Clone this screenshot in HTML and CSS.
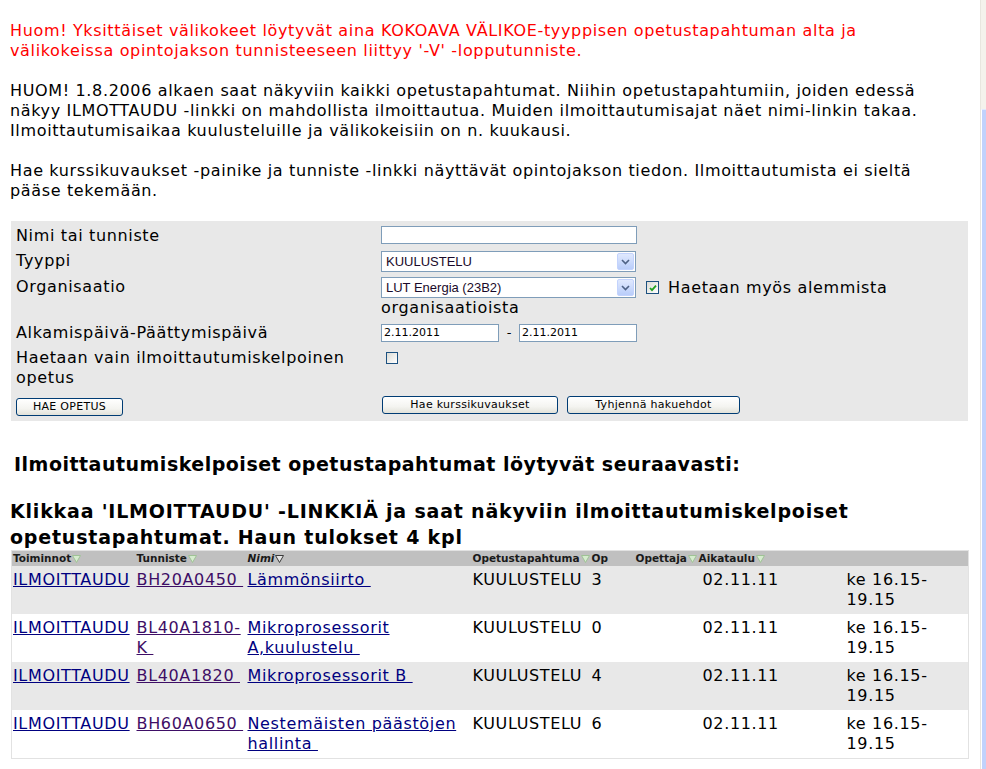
FILE: index.html
```html
<!DOCTYPE html>
<html lang="fi">
<head>
<meta charset="utf-8">
<title>Opetustapahtumat</title>
<link rel="stylesheet" href="styles.css">
</head>
<body>
<div class="page">
  <main class="content">
    <p class="notice">Huom! Yksittäiset välikokeet löytyvät aina KOKOAVA VÄLIKOE-tyyppisen opetustapahtuman alta ja<br>välikokeissa opintojakson tunnisteeseen liittyy '-V' -lopputunniste.</p>
    <p class="info">HUOM! 1.8.2006 alkaen saat näkyviin kaikki opetustapahtumat. Niihin opetustapahtumiin, joiden edessä<br>näkyy ILMOTTAUDU -linkki on mahdollista ilmoittautua. Muiden ilmoittautumisajat näet nimi-linkin takaa.<br>Ilmoittautumisaikaa kuulusteluille ja välikokeisiin on n. kuukausi.</p>
    <p class="info">Hae kurssikuvaukset -painike ja tunniste -linkki näyttävät opintojakson tiedon. Ilmoittautumista ei sieltä<br>pääse tekemään.</p>

    <form class="search">
      <div class="label">Nimi tai tunniste</div>
      <div class="field"><span class="textbox wide"></span></div>

      <div class="label">Tyyppi</div>
      <div class="field"><span class="select"><span class="select-text">KUULUSTELU</span><span class="select-arrow"><svg width="9" height="6" viewBox="0 0 9 6"><path d="M1 1 L4.5 4.5 L8 1" fill="none" stroke="#4d6185" stroke-width="1.6"/></svg></span></span></div>

      <div class="label">Organisaatio</div>
      <div class="field">
        <div class="field-line">
          <span class="select"><span class="select-text">LUT Energia (23B2)</span><span class="select-arrow"><svg width="9" height="6" viewBox="0 0 9 6"><path d="M1 1 L4.5 4.5 L8 1" fill="none" stroke="#4d6185" stroke-width="1.6"/></svg></span></span>
          <span class="check checked"><svg width="10" height="10" viewBox="0 0 10 10"><path d="M2 5 L4 7.2 L8 2.6" fill="none" stroke="#21a121" stroke-width="1.8"/></svg></span>
          <span class="check-label">Haetaan myös alemmista</span>
        </div>
        <div class="field-wrap">organisaatioista</div>
      </div>

      <div class="label">Alkamispäivä-Päättymispäivä</div>
      <div class="field date-line"><span class="textbox date">2.11.2011</span><span class="dash">-</span><span class="textbox date">2.11.2011</span></div>

      <div class="label">Haetaan vain ilmoittautumiskelpoinen<br>opetus</div>
      <div class="field top"><span class="check single"></span></div>

      <div class="label buttons-left"><button type="button" class="btn btn-hae">HAE OPETUS</button></div>
      <div class="field buttons"><button type="button" class="btn btn-kurssi">Hae kurssikuvaukset</button><button type="button" class="btn btn-tyhj">Tyhjennä hakuehdot</button></div>
    </form>

    <h2 class="found">Ilmoittautumiskelpoiset opetustapahtumat löytyvät seuraavasti:</h2>
    <h2 class="click">Klikkaa 'ILMOITTAUDU' -LINKKIÄ ja saat näkyviin ilmoittautumiskelpoiset<br>opetustapahtumat. Haun tulokset 4 kpl</h2>

    <table class="results">
      <colgroup>
        <col class="c1"><col class="c2"><col class="c3"><col class="c4"><col class="c5"><col class="c6"><col class="c7"><col class="c8">
      </colgroup>
      <thead>
        <tr>
          <th>Toiminnot<svg class="tri" width="9" height="8" viewBox="0 0 9 8"><path d="M0.5 0.5 H8.5 L4.5 7.5 Z" fill="#d6ecce" stroke="#9fc296"/></svg></th>
          <th>Tunniste<svg class="tri" width="9" height="8" viewBox="0 0 9 8"><path d="M0.5 0.5 H8.5 L4.5 7.5 Z" fill="#d6ecce" stroke="#9fc296"/></svg></th>
          <th><em>Nimi</em><svg class="tri" width="9" height="8" viewBox="0 0 9 8"><path d="M0.5 0.5 H8.5 L4.5 7.5 Z" fill="#e6e6e6" stroke="#3a3a3a"/></svg></th>
          <th>Opetustapahtuma<svg class="tri" width="9" height="8" viewBox="0 0 9 8"><path d="M0.5 0.5 H8.5 L4.5 7.5 Z" fill="#d6ecce" stroke="#9fc296"/></svg></th>
          <th>Op</th>
          <th>Opettaja<svg class="tri" width="9" height="8" viewBox="0 0 9 8"><path d="M0.5 0.5 H8.5 L4.5 7.5 Z" fill="#d6ecce" stroke="#9fc296"/></svg></th>
          <th>Aikataulu<svg class="tri" width="9" height="8" viewBox="0 0 9 8"><path d="M0.5 0.5 H8.5 L4.5 7.5 Z" fill="#d6ecce" stroke="#9fc296"/></svg></th>
          <th></th>
        </tr>
      </thead>
      <tbody>
        <tr class="odd">
          <td><a href="#" class="lnk">ILMOITTAUDU</a></td>
          <td><a href="#" class="lnk visited">BH20A0450&nbsp;</a></td>
          <td><a href="#" class="lnk">Lämmönsiirto&nbsp;</a></td>
          <td>KUULUSTELU</td>
          <td>3</td>
          <td></td>
          <td class="date-cell">02.11.11</td>
          <td>ke 16.15-<br>19.15</td>
        </tr>
        <tr>
          <td><a href="#" class="lnk">ILMOITTAUDU</a></td>
          <td><a href="#" class="lnk visited">BL40A1810-<br>K&nbsp;</a></td>
          <td><a href="#" class="lnk">Mikroprosessorit<br>A,kuulustelu&nbsp;</a></td>
          <td>KUULUSTELU</td>
          <td>0</td>
          <td></td>
          <td class="date-cell">02.11.11</td>
          <td>ke 16.15-<br>19.15</td>
        </tr>
        <tr class="odd">
          <td><a href="#" class="lnk">ILMOITTAUDU</a></td>
          <td><a href="#" class="lnk visited">BL40A1820&nbsp;</a></td>
          <td><a href="#" class="lnk">Mikroprosessorit B&nbsp;</a></td>
          <td>KUULUSTELU</td>
          <td>4</td>
          <td></td>
          <td class="date-cell">02.11.11</td>
          <td>ke 16.15-<br>19.15</td>
        </tr>
        <tr>
          <td><a href="#" class="lnk">ILMOITTAUDU</a></td>
          <td><a href="#" class="lnk visited">BH60A0650&nbsp;</a></td>
          <td><a href="#" class="lnk">Nestemäisten päästöjen<br>hallinta&nbsp;</a></td>
          <td>KUULUSTELU</td>
          <td>6</td>
          <td></td>
          <td class="date-cell">02.11.11</td>
          <td>ke 16.15-<br>19.15</td>
        </tr>
      </tbody>
    </table>
  </main>
  <aside class="scrollbar"><div class="scroll-track"></div><div class="scroll-thumb"></div></aside>
</div>
</body>
</html>
```

FILE: styles.css
```css
html, body {
  margin: 0;
  padding: 0;
  background: #ffffff;
}

body {
  font-family: "DejaVu Sans", Verdana, sans-serif;
  font-size: 16px;
  line-height: 20px;
  letter-spacing: 0.65px;
  color: #000000;
}

.page {
  display: flex;
  width: 986px;
  height: 769px;
  overflow: hidden;
}

.content {
  width: 980px;
  flex: none;
  padding: 21px 0 0 10px;
  box-sizing: border-box;
}

p {
  margin: 0 0 20px 0;
  white-space: nowrap;
}

.notice {
  color: #ff0000;
}

/* ---------- search form ---------- */
.search {
  width: 957px;
  margin-left: 1px;
  box-sizing: border-box;
  background: #e8e8e8;
  padding: 5px;
  display: grid;
  grid-template-columns: 365px 1fr;
  row-gap: 5px;
}

.label {
  line-height: 20px;
  white-space: nowrap;
}

.field {
  display: flex;
  flex-direction: column;
  align-items: flex-start;
}

.field.top {
  padding-top: 4px;
  padding-left: 5px;
}

.field-line {
  display: flex;
  align-items: center;
  height: 21px;
  white-space: nowrap;
}

.field-wrap {
  line-height: 20px;
}

.textbox {
  display: inline-block;
  box-sizing: border-box;
  height: 18px;
  border: 1px solid #7f9db9;
  background: #ffffff;
  font-family: "DejaVu Sans", Verdana, sans-serif;
  font-size: 11px;
  letter-spacing: 0;
  line-height: 16px;
  padding-left: 2px;
}

.textbox.wide {
  width: 256px;
}

.date-line {
  flex-direction: row;
  align-items: center;
  height: 20px;
}

.textbox.date {
  width: 118px;
}

.dash {
  width: 20px;
  text-align: center;
  font-size: 13px;
  letter-spacing: 0;
}

.select {
  display: inline-flex;
  align-items: center;
  justify-content: space-between;
  box-sizing: border-box;
  width: 255px;
  height: 21px;
  border: 1px solid #7f9db9;
  background: #ffffff;
  padding: 0 1px 0 4px;
  font-family: "Liberation Sans", Arial, sans-serif;
  font-size: 13px;
  letter-spacing: 0;
  color: #1a0a2a;
}

.select-arrow {
  width: 17px;
  height: 17px;
  box-sizing: border-box;
  border: 1px solid #c3d3fd;
  border-radius: 2px;
  background: linear-gradient(#e0e9fe, #b9cdfa);
  display: flex;
  align-items: center;
  justify-content: center;
}

.check {
  display: inline-block;
  box-sizing: border-box;
  width: 13px;
  height: 13px;
  border: 1px solid #1c5180;
  background: linear-gradient(135deg, #dcdcd6, #ffffff);
}

.check.checked {
  margin-left: 10px;
  display: inline-flex;
  align-items: center;
  justify-content: center;
}

.check.single {
  width: 12px;
  height: 12px;
}

.check-label {
  margin-left: 9px;
}

.buttons-left {
  padding-top: 2px;
}

.buttons {
  flex-direction: row;
  padding-top: 3px;
  padding-left: 1px;
  gap: 9px;
}

.btn {
  box-sizing: border-box;
  height: 18px;
  border: 1px solid #003c74;
  border-radius: 3px;
  background: linear-gradient(#ffffff 0%, #f4f4f0 60%, #e2e2da 100%);
  font-family: "DejaVu Sans", Verdana, sans-serif;
  font-size: 11px;
  letter-spacing: 0.3px;
  line-height: 14px;
  color: #000000;
  padding: 0;
  margin: 0;
}

.btn-hae { width: 107px; }
.btn-kurssi { width: 176px; }
.btn-tyhj { width: 173px; }

/* ---------- headings ---------- */
h2 {
  font-weight: bold;
  font-size: 19px;
  letter-spacing: 0.65px;
  margin: 0;
  white-space: nowrap;
}

.found {
  margin-top: 30px;
  padding-left: 4px;
  line-height: 26px;
  letter-spacing: 0.5px;
}

.click {
  margin-top: 21px;
  line-height: 26px;
  letter-spacing: 0.8px;
}

/* ---------- results table ---------- */
.results {
  width: 957px;
  margin-left: 1px;
  border-collapse: collapse;
  table-layout: fixed;
  border: 1px solid #e2e2e2;
}

.c1 { width: 124px; }
.c2 { width: 111px; }
.c3 { width: 225px; }
.c4 { width: 119px; }
.c5 { width: 44px; }
.c6 { width: 63px; }
.c7 { width: 148px; }
.c8 { width: 123px; }

.results th {
  background: #c0c0c0;
  height: 15px;
  padding: 0 0 0 1px;
  text-align: left;
  font-size: 10.5px;
  letter-spacing: 0;
  line-height: 15px;
  font-weight: bold;
  color: #1a1a1a;
  white-space: nowrap;
}

.results th em {
  font-style: italic;
}

.tri {
  margin-left: 1px;
  vertical-align: -1px;
}

.results td {
  vertical-align: top;
  padding: 4px 0 4px 1px;
  line-height: 20px;
  height: 40px;
  white-space: nowrap;
}

.results tr.odd td {
  background: #e8e8e8;
}

.results td.date-cell {
  padding-left: 5px;
}

.lnk {
  color: #000080;
  text-decoration: underline;
}

.lnk.visited {
  color: #3e0e66;
}

/* ---------- scrollbar ---------- */
.scrollbar {
  width: 6px;
  flex: none;
  display: flex;
  flex-direction: column;
  border-left: 1px solid #e8e6df;
  box-sizing: border-box;
}

.scroll-track {
  height: 109px;
  background: #f4f2ec;
}

.scroll-thumb {
  flex: 1;
  background: #c1d2fc;
  border-left: 1px solid #ffffff;
  border-top: 1px solid #e0e8fe;
}
```
